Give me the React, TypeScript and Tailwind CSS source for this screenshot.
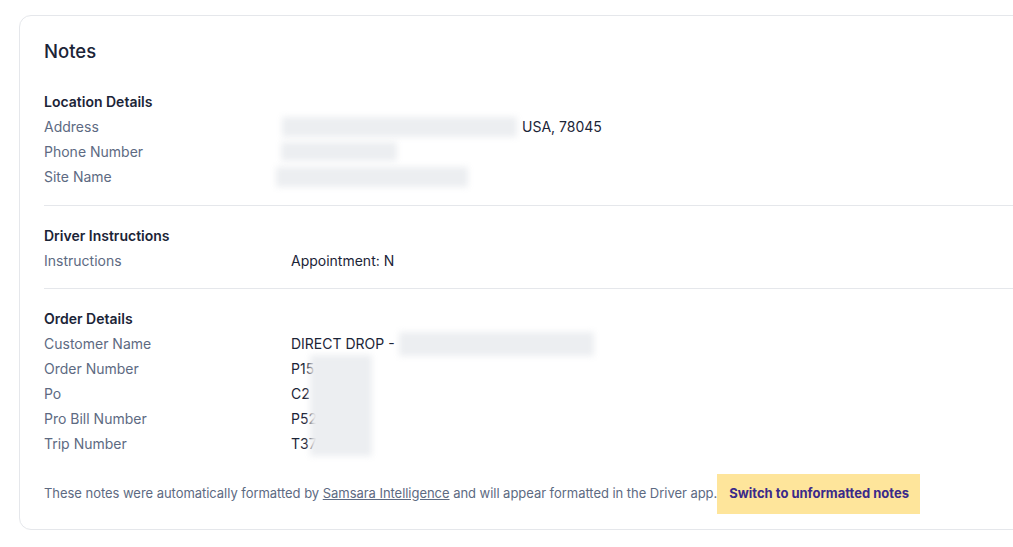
import React from "react";

const Row = ({ label, children }: { label: string; children?: React.ReactNode }) => (
  <div className="flex h-[25px] items-center text-[14px]">
    <div className="w-[247px] shrink-0 text-[#5d6a82]">{label}</div>
    <div className="relative flex items-center text-[#1b2437]">{children}</div>
  </div>
);

const Blur = ({ cls }: { cls: string }) => (
  <div className={`bg-[#eceef1] blur-[3px] ${cls}`} />
);

const Header = ({ children }: { children: React.ReactNode }) => (
  <div className="h-[20px] flex items-center text-[14px] font-semibold text-[#1b2437]">{children}</div>
);

export default function App() {
  return (
    <div className="w-[1013px] h-[547px] overflow-hidden bg-white" style={{ fontFamily: "Inter, 'Noto Sans', sans-serif" }}>
      <div className="mt-[15px] ml-[19px] w-[1060px] rounded-[12px] border border-[#e5e7eb] pl-[24px] pt-[22px] pb-[15px]">
        <div className="h-[28px] flex items-center text-[18.5px] font-medium text-[#1b2437]">Notes</div>

        <div className="mt-[25px] pb-[16px] border-b border-[#e5e7eb]">
          <Header>Location Details</Header>
          <div className="mt-[3px]">
            <Row label="Address">
              <div className="-ml-[9px] flex items-center">
                <Blur cls="w-[235px] h-[20px]" />
                <span className="ml-[5px]">USA, 78045</span>
              </div>
            </Row>
            <Row label="Phone Number">
              <Blur cls="-ml-[10px] w-[116px] h-[19px]" />
            </Row>
            <Row label="Site Name">
              <Blur cls="-ml-[15px] w-[192px] h-[20px]" />
            </Row>
          </div>
        </div>

        <div className="pt-[19px] pb-[15px] border-b border-[#e5e7eb]">
          <Header>Driver Instructions</Header>
          <div className="mt-[3px]">
            <Row label="Instructions">Appointment: N</Row>
          </div>
        </div>

        <div className="pt-[19px]">
          <Header>Order Details</Header>
          <div className="relative mt-[3px]">
            <Row label="Customer Name">
              <span>DIRECT DROP -</span>
              <Blur cls="ml-[4px] w-[195px] h-[24px]" />
            </Row>
            <Row label="Order Number">P15</Row>
            <Row label="Po">C2</Row>
            <Row label="Pro Bill Number">P52</Row>
            <Row label="Trip Number">T37</Row>
            <div className="absolute left-[266px] top-[24px] w-[62px] h-[101px] bg-[#eceef1] blur-[3px]" />
          </div>
        </div>

        <div className="mt-[18px] flex h-[40px] items-center text-[13px] text-[#5d6a82]">
          <span className="whitespace-nowrap tracking-[-0.04px]">
            These notes were automatically formatted by{" "}
            <span className="underline">Samsara Intelligence</span> and will appear formatted in the Driver app.
          </span>
          <button className="h-[40px] bg-[#fee59b] pl-[12px] pr-[11px] text-[13px] font-bold text-[#3a2a8a]">
            Switch to unformatted notes
          </button>
        </div>
      </div>
    </div>
  );
}
